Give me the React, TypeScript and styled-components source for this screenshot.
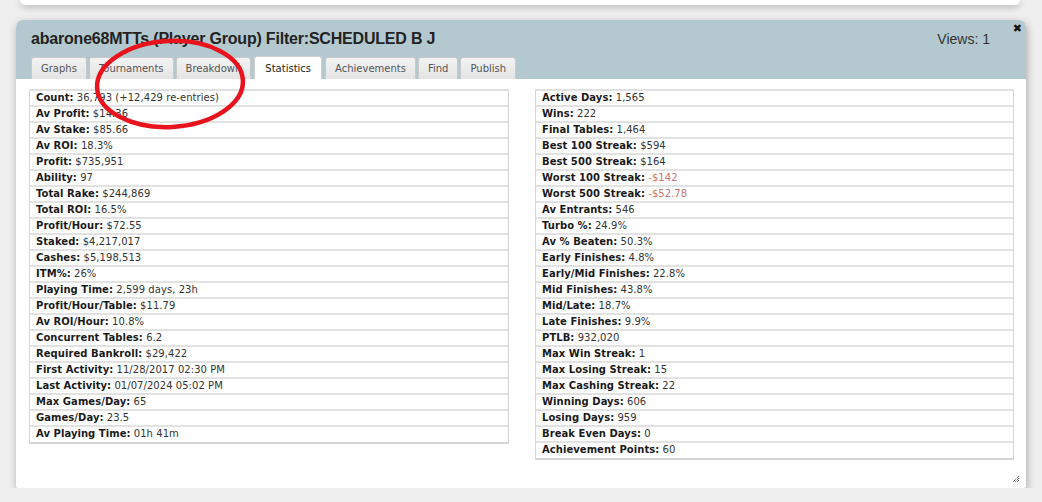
import React from "react";
import styled, { createGlobalStyle } from "styled-components";

const Global = createGlobalStyle`
  html, body { margin: 0; padding: 0; background: #efefef; }
  body { font-family: "DejaVu Sans", Verdana, sans-serif; }
`;

const Page = styled.div`
  display: flex;
  flex-direction: column;
  padding: 0 16px;
  width: 1010px;
`;

const PrevPanel = styled.div`
  height: 5px;
  margin: 0 6px 15px 4px;
  background: #fff;
  border-radius: 0 0 5px 5px;
  box-shadow: 0 2px 7px rgba(0, 0, 0, 0.28);
`;

const Panel = styled.div`
  position: relative;
  height: 468px;
  background: #fff;
  border-radius: 7px 7px 2px 2px;
  box-shadow: 1px 3px 8px rgba(0, 0, 0, 0.3);
  display: flex;
  flex-direction: column;
`;

const Header = styled.div`
  background: #b4c9cf;
  border-radius: 7px 7px 0 0;
  padding: 10px 36px 0 15px;
  display: flex;
  flex-direction: column;
`;

const TitleRow = styled.div`
  display: flex;
  justify-content: space-between;
  align-items: baseline;
  height: 26px;
`;

const Title = styled.h1`
  margin: 0;
  font-family: "Liberation Sans", Arial, sans-serif;
  font-weight: bold;
  font-size: 16px;
  letter-spacing: -0.2px;
  color: #222;
`;

const Views = styled.span`
  font-family: "Liberation Sans", Arial, sans-serif;
  font-size: 14px;
  color: #333;
`;

const Close = styled.span`
  position: absolute;
  top: 2px;
  right: 4px;
  font-size: 11px;
  color: #111;
  font-family: "DejaVu Sans", sans-serif;
`;

const Tabs = styled.div`
  display: flex;
  gap: 2px;
  align-items: flex-end;
  height: 23px;
`;

const Tab = styled.div<{ $active?: boolean }>`
  height: ${(p) => (p.$active ? "23px" : "22px")};
  box-sizing: border-box;
  padding: 0 ${(p) => (p.$active ? "10px" : "9px")};
  display: flex;
  align-items: center;
  font-size: 10px;
  color: ${(p) => (p.$active ? "#222" : "#555")};
  background: ${(p) => (p.$active ? "#fff" : "linear-gradient(#f3f3f3, #e4e4e4)")};
  border: 1px solid ${(p) => (p.$active ? "#d0d0d0" : "#c9c9c9")};
  border-bottom: none;
  border-radius: 3px 3px 0 0;
  margin: 0 ${(p) => (p.$active ? "1px" : "0")};
`;

const Body = styled.div`
  display: grid;
  grid-template-columns: 480px 479px;
  column-gap: 26px;
  padding: 10px 13px 0 13px;
  align-items: start;
`;

const Table = styled.div`
  border: 1px solid #d6d6d6;
  border-top-width: 2px;
  border-top-color: #e0e0e0;
  display: flex;
  flex-direction: column;
`;

const Row = styled.div`
  height: 14px;
  line-height: 14px;
  padding: 0 6px;
  font-size: 10px;
  letter-spacing: 0.05px;
  color: #333;
  border-bottom: 2px solid #e2e2e2;
  white-space: nowrap;
  &:last-child {
    border-bottom: 1px solid #d6d6d6;
    height: 15px;
  }
`;

const Label = styled.b`
  color: #1a1a1a;
`;

const Value = styled.span<{ $neg?: boolean }>`
  color: ${(p) => (p.$neg ? "#c77476" : "#333")};
`;

const Grip = styled.svg`
  position: absolute;
  right: 6px;
  bottom: 5px;
`;

const Ellipse = styled.svg`
  position: absolute;
  left: 0;
  top: 0;
  pointer-events: none;
`;

const left: [string, string][] = [
  ["Count", "36,793 (+12,429 re-entries)"],
  ["Av Profit", "$14.36"],
  ["Av Stake", "$85.66"],
  ["Av ROI", "18.3%"],
  ["Profit", "$735,951"],
  ["Ability", "97"],
  ["Total Rake", "$244,869"],
  ["Total ROI", "16.5%"],
  ["Profit/Hour", "$72.55"],
  ["Staked", "$4,217,017"],
  ["Cashes", "$5,198,513"],
  ["ITM%", "26%"],
  ["Playing Time", "2,599 days, 23h"],
  ["Profit/Hour/Table", "$11.79"],
  ["Av ROI/Hour", "10.8%"],
  ["Concurrent Tables", "6.2"],
  ["Required Bankroll", "$29,422"],
  ["First Activity", "11/28/2017 02:30 PM"],
  ["Last Activity", "01/07/2024 05:02 PM"],
  ["Max Games/Day", "65"],
  ["Games/Day", "23.5"],
  ["Av Playing Time", "01h 41m"],
];

const right: [string, string][] = [
  ["Active Days", "1,565"],
  ["Wins", "222"],
  ["Final Tables", "1,464"],
  ["Best 100 Streak", "$594"],
  ["Best 500 Streak", "$164"],
  ["Worst 100 Streak", "-$142"],
  ["Worst 500 Streak", "-$52.78"],
  ["Av Entrants", "546"],
  ["Turbo %", "24.9%"],
  ["Av % Beaten", "50.3%"],
  ["Early Finishes", "4.8%"],
  ["Early/Mid Finishes", "22.8%"],
  ["Mid Finishes", "43.8%"],
  ["Mid/Late", "18.7%"],
  ["Late Finishes", "9.9%"],
  ["PTLB", "932,020"],
  ["Max Win Streak", "1"],
  ["Max Losing Streak", "15"],
  ["Max Cashing Streak", "22"],
  ["Winning Days", "606"],
  ["Losing Days", "959"],
  ["Break Even Days", "0"],
  ["Achievement Points", "60"],
];

const tabs = ["Graphs", "Tournaments", "Breakdown", "Statistics", "Achievements", "Find", "Publish"];

const StatTable = ({ rows }: { rows: [string, string][] }) => (
  <Table>
    {rows.map(([k, v]) => (
      <Row key={k}>
        <Label>{k}:</Label> <Value $neg={v.startsWith("-")}>{v}</Value>
      </Row>
    ))}
  </Table>
);

export default function App() {
  return (
    <>
      <Global />
      <Page>
        <PrevPanel />
        <Panel>
          <Close>✖</Close>
          <Header>
            <TitleRow>
              <Title>abarone68MTTs (Player Group) Filter:SCHEDULED B J</Title>
              <Views>Views: 1</Views>
            </TitleRow>
            <Tabs>
              {tabs.map((t) => (
                <Tab key={t} $active={t === "Statistics"}>
                  {t}
                </Tab>
              ))}
            </Tabs>
          </Header>
          <Body>
            <StatTable rows={left} />
            <StatTable rows={right} />
          </Body>
          <Grip width="8" height="8" viewBox="0 0 8 8">
            <path d="M7 1 L1 7 M7 3 L3 7 M7 5 L5 7" stroke="#333" strokeWidth="1" strokeDasharray="1 1" />
          </Grip>
        </Panel>
      </Page>
      <Ellipse width="1042" height="502">
        <ellipse cx="170" cy="84" rx="73" ry="43" transform="rotate(-3 170 84)" fill="none" stroke="#e8131d" strokeWidth="4.5" />
      </Ellipse>
    </>
  );
}
